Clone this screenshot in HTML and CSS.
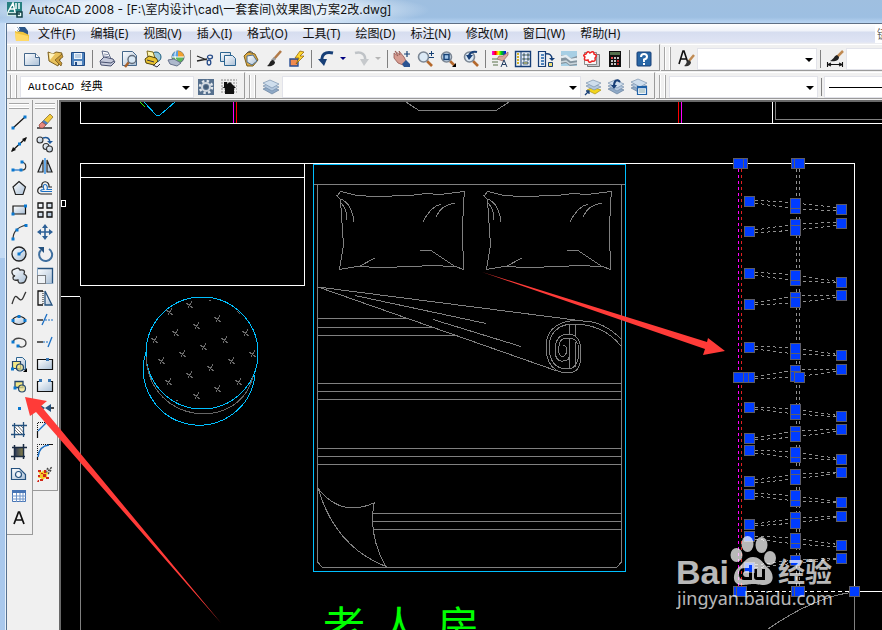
FILE: index.html
```html
<!DOCTYPE html>
<html lang="zh-CN">
<head>
<meta charset="utf-8">
<title>AutoCAD 2008</title>
<link rel="stylesheet" href="styles.css">
</head>
<body>
<svg class="defs" aria-hidden="true">
  <defs>
    <linearGradient id="sheet" x1="0" y1="0" x2="1" y2="1"><stop offset="0" stop-color="#fff"/><stop offset="1" stop-color="#a9bfd6"/></linearGradient>
    <linearGradient id="spectrum"><stop offset="0" stop-color="#f0f"/><stop offset=".25" stop-color="#f00"/><stop offset=".45" stop-color="#ff0"/><stop offset=".65" stop-color="#0d0"/><stop offset="1" stop-color="#00f"/></linearGradient>
    <linearGradient id="shade" x1="0" x2="1"><stop offset="0" stop-color="#23335c"/><stop offset="1" stop-color="#8f8748"/></linearGradient>
    <g id="dot"><rect x="-1.5" y="-1.5" width="3" height="3" fill="#0a78d0"/></g>
    <g id="stack"><path d="M1 11l7-3 9 4-7 4z" fill="#8fa9c6" stroke="#5d7796" stroke-width=".6"/><path d="M1 8l7-3 9 4-7 4z" fill="#b4c8de" stroke="#6c86a5" stroke-width=".6"/><path d="M1 5l7-3 9 4-7 4z" fill="#cfdeed" stroke="#6c86a5" stroke-width=".6"/></g>
    <g id="glass"><path d="M11 11l5 5" stroke="#b4682c" stroke-width="2.6"/><circle cx="7.500" cy="7" r="5" fill="#dbe9f5" stroke="#7c8794" stroke-width="1.600"/></g>
    <g id="brush"><path d="M16 1l-7 8" stroke="#b27a48" stroke-width="2.500"/><path d="M10 8L7 11" stroke="#999" stroke-width="3"/><path d="M8 10c-3 0-3 4-6 6 4 1 8-1 8-4z" fill="#222"/></g>
  </defs>
</svg>
<div class="app">
  <header class="title">
    <svg class="logo" viewBox="0 0 16 16"><path d="M0 0h15v12H0z" fill="#267f80"/><path d="M1 10L6 1l2 9M3 7h4M9 1v6M12 1v6" stroke="#fff" stroke-width="1.500" fill="none"/><path d="M0 10h9v4H0z" fill="#cfe9e6"/><path d="M1 12h12M10 10v5h5v-5z" stroke="#123f45" stroke-width="1.500" fill="#e8fffb"/></svg>
    <h1>AutoCAD 2008 - [F:\室内设计\cad\一套套间\效果图\方案2改.dwg]</h1>
  </header>
  <div class="window">
    <nav class="menu">
      <svg class="doc" viewBox="0 0 16 16"><path d="M3 1h8l3 4v7H3z" fill="#2c5688"/><path d="M1 5l8 1 6 3v6H2z" fill="#f0c43c"/><path d="M1 7l13 3 1 5H2z" fill="#ffda68"/><path d="M3 0v6M0 3h6M1 1l4 4M5 1L1 5" stroke="#fff"/></svg>
      <button>文件(F)</button><button>编辑(E)</button><button>视图(V)</button><button>插入(I)</button><button>格式(O)</button><button>工具(T)</button><button>绘图(D)</button><button>标注(N)</button><button>修改(M)</button><button>窗口(W)</button><button>帮助(H)</button>
      <input class="ask" aria-label="帮助" value="键">
    </nav>
    <div class="row">
      <div class="bar">
        <span class="grip"></span>
        <button aria-label="新建"><svg viewBox="0 0 18 18"><path d="M1.500 3.500h11l4 4v8h-15z" fill="url(#sheet)" stroke="#44678b"/><path d="M12.500 3.500v4h4" fill="#fff" stroke="#44678b"/></svg></button>
        <button aria-label="打开"><svg viewBox="0 0 18 18"><path d="M2 2l5 2 3-2 6 1-4 13-9-5z" fill="#e9c25c" stroke="#7d6224"/><path d="M3 3l6 1-5 6z" fill="#fff3bd"/><path d="M16 4l-7 6 6 6 1-3-3-3 4-3z" fill="#c99a36" stroke="#6d531e" stroke-width=".7"/></svg></button>
        <button aria-label="保存"><svg viewBox="0 0 18 18"><path d="M2.500 2.500h13v13h-13z" fill="#4d82bd" stroke="#1f4a85"/><path d="M5 3h8v6H5z" fill="#eef5fb"/><path d="M6 5h6M6 7h6" stroke="#8aa9cd"/><path d="M5 11h8v4H5z" fill="#d9e5f1"/><path d="M6 12h2v3H6z" fill="#1f4a85"/></svg></button>
        <i class="sep"></i>
        <button aria-label="打印"><svg viewBox="0 0 18 18"><path d="M4 1l6 1 3 7H6z" fill="#fff" stroke="#5b6784"/><path d="M2 11l4-4 9 2 2 3-4 4-10-1z" fill="#c5cadb" stroke="#47506e"/><path d="M3 12l10 1 3-2" stroke="#47506e" fill="none"/><path d="M6 4l4 .6M6 6l5 .6" stroke="#8a93ae"/></svg></button>
        <button aria-label="打印预览"><svg viewBox="0 0 18 18"><path d="M1.500 1.500h10l4 4v10h-14z" fill="url(#sheet)" stroke="#44678b"/><path d="M8 12l-4 5" stroke="#a8622c" stroke-width="2.500"/><circle cx="11" cy="9.500" r="4" fill="#d8e8f5" stroke="#606c7b" stroke-width="1.400"/></svg></button>
        <button aria-label="发布"><svg viewBox="0 0 18 18"><circle cx="12" cy="7" r="5" fill="#9cc8dc" stroke="#1c5c7d"/><path d="M3 1l6 1 2 6-7-1z" fill="#fff7b0" stroke="#806c1c"/><path d="M1 9l4-3 7 2 2 3-4 4-8-2z" fill="#e9c332" stroke="#4f420e"/><path d="M3 10l7 2M9 15l4 2 3-3" stroke="#334" fill="none"/></svg></button>
        <button aria-label="三维 DWF"><svg viewBox="0 0 18 18"><circle cx="11" cy="7" r="6" fill="#5fb55a" stroke="#567"/><path d="M11 1a6 6 0 0 1 6 6h-6z" fill="#f0a030"/><path d="M5 7a6 6 0 0 1 6-6v6z" fill="#5aa0e0"/><path d="M9 1c-2 4-1 8 2 12M5 7h12" stroke="#fff" fill="none"/><path d="M1 10l6-1 7 4-4 3-7-2z" fill="#adb8cc" stroke="#66718b"/></svg></button>
        <i class="sep"></i>
        <button aria-label="剪切"><svg viewBox="0 0 18 18"><path d="M1 6l10 4M1 11l10-2" stroke="#222" stroke-width="1.300"/><ellipse cx="14" cy="7" rx="2.500" ry="1.800" fill="none" stroke="#284d8a" stroke-width="1.300"/><ellipse cx="13" cy="12.500" rx="1.800" ry="2.500" fill="none" stroke="#284d8a" stroke-width="1.300"/></svg></button>
        <button aria-label="复制"><svg viewBox="0 0 18 18"><path d="M1.500 2.500h10v9h-10z" fill="url(#sheet)" stroke="#2c6591"/><path d="M5.500 5.500h8l3 3v7h-11z" fill="url(#sheet)" stroke="#2c6591"/></svg></button>
        <button aria-label="粘贴"><svg viewBox="0 0 18 18"><path d="M2 6l4-4 7 2 3 6-5 6H5z" fill="#dda942" stroke="#7d601d"/><path d="M5 6l6-1 4 6-5 4-5-3z" fill="url(#sheet)" stroke="#4a6e91"/><path d="M5 3l3-2 3 2" fill="none" stroke="#555"/></svg></button>
        <button aria-label="特性匹配"><svg viewBox="0 0 18 18"><use href="#brush"/></svg></button>
        <button aria-label="块编辑器"><svg viewBox="0 0 18 18"><path d="M2 9h8v7H2z" fill="#f08a50" stroke="#274d94" stroke-width="1.400"/><path d="M12 1L7 8h4l-3 6 8-8h-4l4-4z" fill="#ffd62e" stroke="#8a5a00" stroke-width=".7"/></svg></button>
        <i class="sep"></i>
        <button aria-label="放弃"><svg viewBox="0 0 18 18"><path d="M16 3C8 1 4 5 5 11" fill="none" stroke="#173f77" stroke-width="3"/><path d="M1 9h9l-3 7z" fill="#173f77"/></svg></button>
        <button class="drop" aria-label="放弃列表"></button>
        <button aria-label="重做"><svg viewBox="0 0 18 18"><path d="M3 3c7-2 11 2 10 8" fill="none" stroke="#bfc3c7" stroke-width="2.500"/><path d="M8 9h9l-5 7z" fill="#c6c9cc"/></svg></button>
        <button class="drop off" aria-label="重做列表"></button>
        <i class="sep"></i>
        <button aria-label="平移"><svg viewBox="0 0 18 18"><path d="M1 3l4 3-3-5 5 4-1-4 5 6 2 4-3 4-5-2-4-5z" fill="#d69c91" stroke="#925750" stroke-width=".8"/><path d="M9 14l4-4 4 4v3h-6z" fill="#2b5391"/><path d="M14 1v6M11 4h6" stroke="#174175" stroke-width="1.200"/></svg></button>
        <button aria-label="实时缩放"><svg viewBox="0 0 18 18"><use href="#glass"/><path d="M13 3.500h5M15.500 1v5M13 7.500h5" stroke="#174175"/></svg></button>
        <button aria-label="窗口缩放"><svg viewBox="0 0 18 18"><use href="#glass"/><path d="M5 4.500h5v5H5z" fill="#9fc4ea" stroke="#174175" stroke-width="1.500"/><path d="M17 13v4h-4z"/></svg></button>
        <button aria-label="缩放上一个"><svg viewBox="0 0 18 18"><use href="#glass"/><path d="M15 2c-5-1-8 1-8 5" fill="none" stroke="#173f77" stroke-width="2.200"/><path d="M4 5h7l-4 5z" fill="#173f77"/></svg></button>
        <i class="sep"></i>
        <button aria-label="特性"><svg viewBox="0 0 18 18"><path d="M1 1h14v4H1z" fill="url(#spectrum)"/><path d="M17 5l-5 6-6-2 2-3h4l5-4z" fill="#dba89b" stroke="#92605a" stroke-width=".7"/><path d="M1 9h6M1 12h6M2 15h5" stroke="#8b9a80" stroke-width="1.600"/><path d="M10 17l3-7 3 7M11 14.500h4" stroke="#243f63" fill="none"/></svg></button>
        <button aria-label="设计中心"><svg viewBox="0 0 18 18"><path d="M1.500 1.500h15v15h-15z" fill="#edf2f4" stroke="#173f77" stroke-width="1.400"/><path d="M7 1v16" stroke="#173f77"/><path d="M3 4h2M3 7h2M3 10h2M3 13h2" stroke="#d2b22a" stroke-width="2"/><path d="M9 4h2v2H9zM13 4h2v2h-2zM9 8h2v2H9zM13 8h2v2h-2zM9 12h5v2H9z" fill="#f1df72" stroke="#173f77" stroke-width=".8"/></svg></button>
        <button aria-label="工具选项板"><svg viewBox="0 0 18 18"><path d="M1.500 1.500h7v15h-7z" fill="#e7edf5" stroke="#173f77" stroke-width="1.200"/><path d="M4 5h3M4 8h3M4 11h3M4 14h3" stroke="#1f62a8" stroke-width="1.500"/><path d="M8 4q7-1 7 5" fill="none" stroke="#173f77" stroke-width="1.500"/><path d="M12 8h6l-3 3z" fill="#173f77"/><path d="M11.500 12.500h4v4h-4z" fill="#f1df72" stroke="#173f77"/></svg></button>
        <button aria-label="图纸集管理器"><svg viewBox="0 0 18 18"><path d="M1 1h16v15H1z" fill="#a7cfe4"/><path d="M1 5h4l6 3 6-2v9l-7 1-4-3-5 1z" fill="#84949f"/><path d="M1 7l5-1 5 4 6-1" stroke="#e5edf1" stroke-width="2.500" fill="none"/><path d="M1 12l5-1 4 3 7-1" stroke="#cdd8de" stroke-width="1.500" fill="none"/></svg></button>
        <button aria-label="标记集管理器"><svg viewBox="0 0 18 18"><path d="M4.500 4.500h12v12h-12z" fill="#c9cdd2" stroke="#777"/><path d="M1.500 2.500h12v12h-12z" fill="#f6f6f6" stroke="#8b8b8b"/><path d="M3 4q2-4 4-1 4-3 4 1 4 1 1 4 1 4-3 3-3 3-4-1-5 1-3-3-3-2 1-3z" fill="#fff" stroke="#e22" stroke-width="1.500"/></svg></button>
        <button aria-label="快速计算器"><svg viewBox="0 0 18 18"><path d="M3 1h12v16H3z" fill="#111"/><path d="M4 2h10v3H4z" fill="#52704c"/><path d="M5 8h2M8 8h2M11 8h2M5 11h2M8 11h2M5 14h2M8 14h2" stroke="#fff" stroke-width="1.600"/><path d="M11 11h2M11 14h2M5 8h2" stroke="#e22" stroke-width="1.600"/></svg></button>
        <i class="sep"></i>
        <button aria-label="帮助"><svg viewBox="0 0 18 18"><rect x="2" y="2" width="14" height="14" rx="1" fill="#2866a5" stroke="#173f77"/><path d="M6 7q0-3 3-3t3 2.500-3 3V12" stroke="#fff" stroke-width="2" fill="none"/><path d="M8 13h2v2H8z" fill="#fff"/></svg></button>
      </div>
      <div class="bar last">
        <span class="grip"></span>
        <button aria-label="文字样式"><svg viewBox="0 0 18 18"><path d="M2 14L6 1h1l4 12M4 9h6" stroke="#111" stroke-width="1.600" fill="none"/><path d="M17 5l-5 6" stroke="#c08a52" stroke-width="2.500"/><path d="M12 10c-3 1-2 4-5 6 4 1 7-1 7-4z" fill="#333"/></svg></button>
        <span class="combo w120"><select aria-label="文字样式"><option></option></select></span>
        <i class="sep"></i>
        <button aria-label="标注样式"><svg viewBox="0 0 18 18"><path d="M17 1l-6 6" stroke="#c08a52" stroke-width="2.500"/><path d="M11 5c-3 1-3 4-7 6 4 1 9 0 9-4z" fill="#222"/><path d="M1.500 12v5M16.500 12v5M2 14.500h14M5 13l-3 1.500L5 16M13 13l3 1.500-3 1.500" stroke="#111" stroke-width="1.100" fill="none"/></svg></button>
        <span class="combo w150"><select aria-label="标注样式"><option></option></select></span>
      </div>
    </div>
    <div class="row">
      <div class="bar">
        <span class="grip"></span>
        <span class="combo w174"><select aria-label="工作空间"><option>AutoCAD 经典</option></select></span>
        <button aria-label="工作空间设置"><svg viewBox="0 0 18 18"><path d="M1 1h16v16H1z" fill="#56708e"/><circle cx="9" cy="9" r="6" fill="none" stroke="#e3e8ed" stroke-width="2.500" stroke-dasharray="2.400 2.300"/><circle cx="9" cy="9" r="4" fill="none" stroke="#d2d8df" stroke-width="2"/><circle cx="9" cy="9" r="2" fill="#445b75"/></svg></button>
        <button aria-label="我的工作空间"><svg viewBox="0 0 18 18"><path d="M1 2h16M1 5h16M1 8h16M1 11h16M1 14h16" stroke="#888" stroke-dasharray="2 1"/><path d="M4 9V4h3v2l3-2 6 6h-2v6H5v-6H2z" fill="#111"/></svg></button>
      </div>
      <div class="bar">
        <span class="grip"></span>
        <button aria-label="图层特性管理器"><svg viewBox="0 0 18 18"><use href="#stack"/></svg></button>
        <span class="combo w299"><select aria-label="图层"><option></option></select></span>
        <button aria-label="将对象的图层置为当前"><svg viewBox="0 0 18 18"><path d="M3 12l6-3 8 3-6 4z" fill="#f3d51d" stroke="#988100" stroke-width=".6"/><path d="M2 8l7-3 8 4-7 3z" fill="#b4c8de" stroke="#6c86a5" stroke-width=".6"/><path d="M2 5l7-3 8 3-7 4z" fill="#cfdeed" stroke="#6c86a5" stroke-width=".6"/><path d="M1 17l4-4M2 13h3v3" stroke="#173f77" stroke-width="1.300" fill="none"/></svg></button>
        <button aria-label="上一个图层"><svg viewBox="0 0 18 18"><use href="#stack"/><path d="M13 4c-3-4-6-1-6 4" stroke="#173f77" stroke-width="2" fill="none"/><path d="M4 7h6l-3 4z" fill="#173f77"/></svg></button>
        <button aria-label="图层状态管理器"><svg viewBox="0 0 18 18"><use href="#stack" y="-1"/><path d="M7.500 8.500h9v8h-9z" fill="#eef4fb" stroke="#1f62a8" stroke-width="1.200"/><path d="M7 9.500h10" stroke="#1f62a8" stroke-width="1.500"/><path d="M9 12h6M9 14h6" stroke="#8aa"/></svg></button>
      </div>
      <div class="bar last">
        <span class="grip"></span>
        <span class="combo w149"><select aria-label="颜色"><option></option></select></span>
        <i class="sep"></i>
        <span class="combo w150 linetype"><select aria-label="线型"><option></option></select></span>
      </div>
    </div>
    <main class="work">
      <div class="palette">
        <span class="hgrip"></span>
        <button aria-label="直线"><svg viewBox="0 0 18 18"><path d="M3 15L15 4" stroke="#111" stroke-width="1.200"/><use href="#dot" x="3" y="15"/><use href="#dot" x="15" y="4"/></svg></button>
        <button aria-label="构造线"><svg viewBox="0 0 18 18"><path d="M2 16L16 3" stroke="#111" stroke-width="1.200"/><path d="M1 17l2-5 3 3zM17 2l-2 5-3-3z" fill="#111"/><use href="#dot" x="9.500" y="9"/></svg></button>
        <button aria-label="多段线"><svg viewBox="0 0 18 18"><path d="M3 13h9" stroke="#1b6fc4" stroke-width="1.200"/><path d="M12 13c5 0 5-7 0-8" stroke="#333" stroke-width="1.200" fill="none"/><use href="#dot" x="3" y="13"/><use href="#dot" x="11" y="13"/><use href="#dot" x="12" y="5"/></svg></button>
        <button aria-label="正多边形"><svg viewBox="0 0 18 18"><path d="M9 2.500L15.500 8 13 15.500H5.500L3 8z" fill="url(#sheet)" stroke="#222" stroke-width="1.200"/></svg></button>
        <button aria-label="矩形"><svg viewBox="0 0 18 18"><path d="M3 5h12.500v8H3z" fill="url(#sheet)" stroke="#111" stroke-width="1.200"/><use href="#dot" x="3" y="13"/><use href="#dot" x="15.500" y="5"/></svg></button>
        <button aria-label="圆弧"><svg viewBox="0 0 18 18"><path d="M3 16C3 9 8 4 16 2" stroke="#333" stroke-width="1.200" fill="none"/><use href="#dot" x="3" y="16"/><use href="#dot" x="7" y="7"/><use href="#dot" x="16" y="2.500"/></svg></button>
        <button aria-label="圆"><svg viewBox="0 0 18 18"><circle cx="9" cy="9" r="7" fill="url(#sheet)" stroke="#222" stroke-width="1.300"/><path d="M9 9l5-4" stroke="#1b6fc4" stroke-width="1.300"/><use href="#dot" x="9" y="9"/></svg></button>
        <button aria-label="修订云线"><svg viewBox="0 0 18 18"><path d="M3 8q-3-5 2-6 4-2 5 1 6-1 4 4 4 2 2 5-1 4-4 4-4 1-4-3-5 1-5-2 0-2 2-2z" fill="url(#sheet)" stroke="#333" stroke-width="1.300"/></svg></button>
        <button aria-label="样条曲线"><svg viewBox="0 0 18 18"><path d="M2 15C4 9 5 6 7 8s4 5 6 1 2-5 3-6" stroke="#333" stroke-width="1.300" fill="none"/></svg></button>
        <button aria-label="椭圆"><svg viewBox="0 0 18 18"><ellipse cx="9" cy="9.500" rx="6.500" ry="4" fill="url(#sheet)" stroke="#222" stroke-width="1.200"/><use href="#dot" x="3" y="9.500"/><use href="#dot" x="9" y="5.500"/><use href="#dot" x="15" y="9.500"/></svg></button>
        <button aria-label="椭圆弧"><svg viewBox="0 0 18 18"><path d="M3 9c2-6 13-4 13 1 0 4-5 5-7 3" stroke="#444" stroke-width="1.300" fill="none"/><use href="#dot" x="3" y="9"/><use href="#dot" x="8" y="13"/></svg></button>
        <button aria-label="插入块"><svg viewBox="0 0 18 18"><path d="M6.500 2.500h6l3 3v9h-9z" fill="url(#sheet)" stroke="#2c6591"/><path d="M2.500 6.500h8v7h-8z" fill="#f3e684" stroke="#24466b" stroke-width="1.200"/><circle cx="10" cy="12.500" r="3.500" fill="#f3e684" fill-opacity=".7" stroke="#24466b" stroke-width="1.200"/><use href="#dot" x="2.500" y="14"/><path d="M17 13v4h-4z"/></svg></button>
        <button aria-label="创建块"><svg viewBox="0 0 18 18"><path d="M5 4.500h8v6H5z" fill="#f3e684" stroke="#24466b" stroke-width="1.300"/><circle cx="12" cy="11.500" r="3.500" fill="#f3e684" fill-opacity=".7" stroke="#24466b" stroke-width="1.200"/><use href="#dot" x="5" y="11"/></svg></button>
        <button aria-label="点"><svg viewBox="0 0 18 18"><use href="#dot" x="9.500" y="9.500"/></svg></button>
        <button aria-label="图案填充"><svg viewBox="0 0 18 18"><path d="M5 5h9v8H5z" fill="#fff"/><path d="M5 6l7 7M8 5l6 7M5 9l4 4M11 5l3 3" stroke="#777"/><path d="M2 4.500h15M1 13.500h14M4.500 2v15M13.500 1v15" stroke="#24517e" stroke-width="1.300"/></svg></button>
        <button aria-label="渐变色"><svg viewBox="0 0 18 18"><path d="M4 4h10v10H4z" fill="url(#shade)"/><path d="M2 4.500h15M1 13.500h14M4.500 2v15M13.500 1v15" stroke="#1b2b42" stroke-width="1.500"/></svg></button>
        <button aria-label="面域"><svg viewBox="0 0 18 18"><path d="M1.500 14.500v-11h8l6 6v5z" fill="url(#sheet)" stroke="#24517e" stroke-width="1.200"/><circle cx="8.500" cy="9.500" r="3" fill="#f0f5fa" stroke="#24517e" stroke-width="1.200"/></svg></button>
        <button aria-label="表格"><svg viewBox="0 0 18 18"><path d="M2.500 3.500h13v11h-13z" fill="#fff" stroke="#4775b5"/><path d="M2 3h14v3H2z" fill="#4775b5"/><path d="M6.500 6v9M10 6v9M13 6v9M2 9h14M2 12h14" stroke="#6f95ca"/></svg></button>
        <button aria-label="多行文字"><svg viewBox="0 0 18 18"><path d="M4 15L8.500 3h1L14 15M6 11h7" stroke="#111" stroke-width="1.700" fill="none"/></svg></button>
      </div>
      <div class="palette">
        <span class="hgrip"></span>
        <button aria-label="删除"><svg viewBox="0 0 18 18"><path d="M1 15h15" stroke="#111" stroke-width="1.300"/><path d="M6 9l8-8 3 3-7 8z" fill="#f3cb3d" stroke="#7d601d" stroke-width=".7"/><path d="M6 9l4 3 2-2-4-3z" fill="#4b7fc0"/><path d="M3 12l3-3 4 3-3 3H4z" fill="#e68a80" stroke="#8d3c35" stroke-width=".7"/></svg></button>
        <button aria-label="复制对象"><svg viewBox="0 0 18 18"><circle cx="4" cy="5" r="3" fill="url(#sheet)" stroke="#333" stroke-width="1.100"/><path d="M7 3q6-2 7 4" stroke="#1d5799" stroke-width="1.500" fill="none"/><path d="M11 6h6l-3 3z" fill="#1d5799"/><circle cx="10" cy="11.500" r="3" fill="url(#sheet)" stroke="#333" stroke-width="1.100"/><circle cx="13.500" cy="14" r="3" fill="url(#sheet)" stroke="#333" stroke-width="1.100"/></svg></button>
        <button aria-label="镜像"><svg viewBox="0 0 18 18"><path d="M7 3v12H2zM11 3v12h5z" fill="url(#sheet)" stroke="#222" stroke-width="1.200"/><path d="M9 1v16" stroke="#1b86e8" stroke-width="1.300"/></svg></button>
        <button aria-label="偏移"><svg viewBox="0 0 18 18"><path d="M16 8h-3c1-7-9-7-7 0-5-1-6 7-1 7h11" stroke="#222" stroke-width="1.200" fill="none"/><path d="M16 10.500h-5c1-2 0-5-2-5s-2 3-1 5c-4 0-4 2-2 2h10" stroke="#1b6fc4" stroke-width="1.100" fill="none"/></svg></button>
        <button aria-label="阵列"><svg viewBox="0 0 18 18"><path d="M2 2h5v5H2zM11 2h5v5h-5zM2 11h5v5H2zM11 11h5v5h-5z" fill="url(#sheet)" stroke="#111" stroke-width="1.300"/></svg></button>
        <button aria-label="移动"><svg viewBox="0 0 18 18"><path d="M9 3v12M3 9h12" stroke="#2c5f96" stroke-width="1.600"/><path d="M9 1l3 4H6zM9 17l3-4H6zM1 9l4-3v6zM17 9l-4-3v6z" fill="#2c5f96"/></svg></button>
        <button aria-label="旋转"><svg viewBox="0 0 18 18"><path d="M13 4a6.500 6.500 0 1 1-8 1" stroke="#3f6f9f" stroke-width="2" fill="none"/><path d="M2 2h6v6z" fill="#24517e"/></svg></button>
        <button aria-label="缩放"><svg viewBox="0 0 18 18"><path d="M1.500 1.500h15v15h-15z" fill="url(#sheet)"/><path d="M1 1.500h15.500V17" fill="none" stroke="#24517e" stroke-width="1.300"/><path d="M1.500 1v7M10 16.500h7" stroke="#8ba5bf"/><path d="M1.500 8.500h8v8h-8z" fill="#eef2f6" stroke="#111" stroke-dasharray="1 1"/></svg></button>
        <button aria-label="拉伸"><svg viewBox="0 0 18 18"><path d="M9 2v14h7z" fill="url(#sheet)" stroke="#24517e" stroke-width="1.300"/><path d="M7 2H2v14h5" fill="none" stroke="#111" stroke-width="1.300"/><path d="M7 2v14" stroke="#111" stroke-dasharray="1 1"/></svg></button>
        <button aria-label="修剪"><svg viewBox="0 0 18 18"><path d="M1 9h6" stroke="#111" stroke-width="1.300"/><path d="M9 9h8" stroke="#1b6fc4" stroke-dasharray="2 1"/><path d="M6 14l5-11" stroke="#1b6fc4" stroke-width="1.300"/></svg></button>
        <button aria-label="延伸"><svg viewBox="0 0 18 18"><path d="M1 9h6" stroke="#111" stroke-width="1.300"/><path d="M7 9h6" stroke="#1b6fc4" stroke-dasharray="2 1"/><path d="M12 14l4-10" stroke="#1b6fc4" stroke-width="1.300"/></svg></button>
        <button aria-label="打断于点"><svg viewBox="0 0 18 18"><path d="M1.500 4.500h15v10h-15z" fill="url(#sheet)" stroke="#111" stroke-width="1.200"/><path d="M10 3h3v3h-3z" fill="#3a78b5"/></svg></button>
        <button aria-label="打断"><svg viewBox="0 0 18 18"><path d="M5 4.500H1.500v10h15v-10H13" fill="url(#sheet)" stroke="#111" stroke-width="1.200"/><path d="M3 2h3v3H3zM12 2h3v3h-3z" fill="#3a78b5"/></svg></button>
        <button aria-label="合并"><svg viewBox="0 0 18 18"><path d="M0 9h4M14 9h4" stroke="#111" stroke-width="1.500"/><path d="M3 5l6 4-6 4zM15 5L9 9l6 4z" fill="#24517e"/></svg></button>
        <button aria-label="倒角"><svg viewBox="0 0 18 18"><path d="M1.500 9V1.500H16" fill="none" stroke="#111" stroke-dasharray="1 1"/><path d="M1.500 17v-7M10 1.500h7" stroke="#111" stroke-width="1.200"/><path d="M2 10l8-8" stroke="#1b6fc4" stroke-width="1.300"/></svg></button>
        <button aria-label="圆角"><svg viewBox="0 0 18 18"><path d="M1.500 12V1.500H12" fill="none" stroke="#111" stroke-dasharray="1 1"/><path d="M1.500 17v-3M12 1.500h5" stroke="#111" stroke-width="1.200"/><path d="M2 14Q3 3 13 2" stroke="#1b6fc4" stroke-width="1.400" fill="none"/></svg></button>
        <button aria-label="分解"><svg viewBox="0 0 18 18"><path d="M10 8l6-6M12 3l-2 3M15 5l-3 4" stroke="#444" stroke-width="1.500" stroke-dasharray="2 1"/><path d="M2 6l4 1 1-2 2 3 3-1-1 4 1 3-3-1-3 3-1-3-3 0 2-3z" fill="#f4ca29"/><path d="M2 5h3v2H2zM8 5h2v3H8zM2 10h2v2H2zM7 9h3v3H7zM10 12h3v2h-3zM4 14h3v2H4zM2 15h1v2H1zM5 8h2v1H5z" fill="#d32619"/></svg></button>
      </div>
      <section class="canvas" aria-label="绘图区">
        <svg class="drawing" shape-rendering="crispEdges">
          <defs>
            <g id="tick"><path d="M-4 -2l7 5M2 -4l-4 7"/></g>
            <g id="pillow">
              <path d="M337.500 195.500l3-4 17 4 17 1 36-1 15-2 15 1 24-3-1 12-1 27 1 39-8-3-26-1-15 1-35 1-22-1-18 3 4-24-2-30-1-16-4-4z"/>
              <path d="M341 199q11 5 13 23M341 203q7 7 5 17M423 222q7-15 18-18M436 217q5-12 19-14M420 250.500h11l24 16M375 258l-17 9"/>
            </g>
            <rect id="nib" x="-5" y="-5" width="10" height="10"/>
          </defs>
          <g transform="translate(-61 -102)" fill="none">
            <g stroke="#fff">
              <path d="M80.500 102v21.500H2000M772.500 102v21M80.500 163.500h774V592M80.500 163v122.500h224V163M80.500 177.500h224M61 296.500h19"/>
              <path d="M61.500 200.500h4v6h-4z"/>
              <path d="M740 591.500h112" stroke-dasharray="4 3"/><path d="M855 591.500H2000"/>
            </g>
            <g stroke="#808080">
              <path d="M80.500 297v2000M775.500 102v17.500H2000M406 102l13 8.500h77l13-8.500M854.500 597v2000"/>
              <path d="M313 184.500h312M317.500 184v378l5 5.500h294l5-5.500V184"/>
              <path d="M317 318.500h91M317 327.500h116M317 335.500h138M317 383.500h304M317 391.500h304M317 399.500h304M317 448.500h304M317 456.500h304M317 464.500h304M373 513.500h248M372 521.500h249M373 529.500h248"/>
              <path d="M318 287l265 34M318 287l239 84M355 295.500l131 28M433 319.500l88 27"/>
              <path d="M621 339q-18-18-38-18c-20-2-37 5-37 26 0 17 9 26 21 26s14-8 14-20-4-19-13-19-13 7-13 16 4 12 8 11 6-1 6-4"/>
              <path d="M621 346q-18-22-48-22c-14 0-24 9-24 23s7 22 18 22c9 0 12-7 12-19 0-7-4-12-12-12s-9 8-8 15c1 5 7 5 8-3 0-3-2-5-4-5M569.500 325v9M569.500 338v31M575.500 324v13M575.500 342v25"/>
              <use href="#pillow"/><use href="#pillow" x="147"/>
              <path d="M317 487q23 31 57 16v1q-6 31 12 63M318 488q17 59 69 79"/>
              <path d="M854 592q-40 5-86 37"/>
            </g>
            <g stroke="#00bfff">
              <path d="M313.500 571.500v-407h312v407z"/>
              <path d="M144 102l12 13h4l15-13"/>
              <circle cx="202" cy="353" r="56"/><path d="M146 352a56 56 0 1 0 109 23"/>
            </g>
            <path d="M140 102l5 5" stroke="#3f0"/>
            <path d="M146 357C150 426 240 432 253 376" stroke="#666"/>
            <g stroke="#6a6a6a">
              <use href="#tick" x="190" y="305"/><use href="#tick" x="170" y="312"/><use href="#tick" x="218" y="319"/><use href="#tick" x="197" y="326"/><use href="#tick" x="246" y="333"/><use href="#tick" x="176" y="333"/><use href="#tick" x="225" y="340"/><use href="#tick" x="155" y="340"/><use href="#tick" x="204" y="347"/><use href="#tick" x="183" y="354"/><use href="#tick" x="253" y="354"/><use href="#tick" x="232" y="361"/><use href="#tick" x="162" y="361"/><use href="#tick" x="211" y="368"/><use href="#tick" x="190" y="375"/><use href="#tick" x="169" y="382"/><use href="#tick" x="239" y="382"/><use href="#tick" x="218" y="389"/><use href="#tick" x="197" y="396"/><path d="M237 311l3 3M209 301l2-1M176 400l2 1"/>
            </g>
            <path d="M233.500 102v21M681.500 102v21" stroke="#f0f"/><path d="M236.500 102v21M678.500 102v21" stroke="#f00"/>
            <path d="M738.500 169v422" stroke="#f0f" stroke-dasharray="3 3"/><path d="M741.500 169v422" stroke="#e02020" stroke-dasharray="3 3"/>
            <g stroke="#909090" stroke-dasharray="3 3">
              <path d="M796.500 169v422M799.500 169v422"/>
              <path d="M755 200l40 3 46 5M755 203l40 6 46 2M755 230l40-6 46-2M755 233l40-3 46-5M755 272l40 3 46 7M755 275l40 6 46 2M755 303l40-7 46-1M755 305l40-2 46-6M755 346l40 2 46 7M755 349l40 5 46 2M755 377l40-7 46-1M755 379l40-2 46-6"/>
              <path d="M755 407l40 2 46 7M755 409l40 5 46 3M755 438l40-7 46-2M755 440l40-3 46-6M755 450l40 2 46 7M755 453l40 5 46 2M755 480l40-6 46-2M755 483l40-4 46-6M755 493l40 3 46 6M755 496l40 5 46 2M755 524l40-6 46-2M755 526l40-3 46-6M755 536l40 2 46 7M755 539l40 5 46 3M755 565l40-5 46-2M755 568l40-5 46-4"/>
            </g>
            <g fill="#003cff" stroke="#5c5c68">
              <use href="#nib" x="742.500" y="163.500"/><use href="#nib" x="738.500" y="163.500"/><use href="#nib" x="796.500" y="163.500"/><use href="#nib" x="799.500" y="163.500"/>
              <use href="#nib" x="749.500" y="201.500"/><use href="#nib" x="749.500" y="231.500"/><use href="#nib" x="749.500" y="273.500"/><use href="#nib" x="749.500" y="304.500"/><use href="#nib" x="749.500" y="347.500"/><use href="#nib" x="749.500" y="377.500"/><use href="#nib" x="749.500" y="407.500"/><use href="#nib" x="749.500" y="438.500"/><use href="#nib" x="749.500" y="450.500"/><use href="#nib" x="749.500" y="481.500"/><use href="#nib" x="749.500" y="494.500"/><use href="#nib" x="749.500" y="524.500"/><use href="#nib" x="749.500" y="536.500"/><use href="#nib" x="749.500" y="567.500"/>
              <use href="#nib" x="795.500" y="208.500"/><use href="#nib" x="795.500" y="203.500"/><use href="#nib" x="795.500" y="224.500"/><use href="#nib" x="795.500" y="230.500"/><use href="#nib" x="795.500" y="280.500"/><use href="#nib" x="795.500" y="275.500"/><use href="#nib" x="795.500" y="297.500"/><use href="#nib" x="795.500" y="302.500"/><use href="#nib" x="795.500" y="354.500"/><use href="#nib" x="795.500" y="348.500"/><use href="#nib" x="795.500" y="370.500"/><use href="#nib" x="795.500" y="376.500"/>
              <use href="#nib" x="795.500" y="414.500"/><use href="#nib" x="795.500" y="409.500"/><use href="#nib" x="795.500" y="431.500"/><use href="#nib" x="795.500" y="436.500"/><use href="#nib" x="795.500" y="457.500"/><use href="#nib" x="795.500" y="452.500"/><use href="#nib" x="795.500" y="474.500"/><use href="#nib" x="795.500" y="479.500"/><use href="#nib" x="795.500" y="501.500"/><use href="#nib" x="795.500" y="495.500"/><use href="#nib" x="795.500" y="517.500"/><use href="#nib" x="795.500" y="523.500"/><use href="#nib" x="795.500" y="543.500"/><use href="#nib" x="795.500" y="538.500"/><use href="#nib" x="795.500" y="560.500"/>
              <use href="#nib" x="841.500" y="209.500"/><use href="#nib" x="841.500" y="223.500"/><use href="#nib" x="841.500" y="282.500"/><use href="#nib" x="841.500" y="295.500"/><use href="#nib" x="841.500" y="355.500"/><use href="#nib" x="841.500" y="369.500"/><use href="#nib" x="841.500" y="416.500"/><use href="#nib" x="841.500" y="429.500"/><use href="#nib" x="841.500" y="459.500"/><use href="#nib" x="841.500" y="472.500"/><use href="#nib" x="841.500" y="502.500"/><use href="#nib" x="841.500" y="516.500"/><use href="#nib" x="841.500" y="545.500"/><use href="#nib" x="841.500" y="558.500"/>
              <use href="#nib" x="743.500" y="377.500"/><use href="#nib" x="738.500" y="377.500"/><use href="#nib" x="799.500" y="377.500"/><use href="#nib" x="738.500" y="591.500"/><use href="#nib" x="741.500" y="591.500"/><use href="#nib" x="796.500" y="591.500"/><use href="#nib" x="799.500" y="591.500"/><use href="#nib" x="854.500" y="591.500"/>
            </g>
            <text class="room" x="323 378 437" y="642">老人房</text>
          </g>
        </svg>
      </section>
    </main>
  </div>
  <svg class="overlay">
    <g fill="#ff3b38"><path d="M482 272L707 342l1-4 17 13-22 4 2-6z"/><path d="M25 397l22 4-6 5L221 623 36 412l-6 4z"/></g>
    <g class="mark">
      <text class="bai" x="676" y="584">Bai</text>
      <path fill-rule="evenodd" d="M753 557c7 0 9 5 14 10 8 6 8 18-3 18-5 0-7-1-11-1s-6 1-11 1c-10 0-10-11-4-17 6-5 8-11 15-11zM749 565v3h-4c-5 0-6 3-6 6 0 5 3 6 6 6h7v-15zm-3 6h3v6h-3c-4 0-4-6 0-6zM754 569v8c0 2 1 3 3 3h8v-11h-3v8h-5v-8z"/>
      <ellipse cx="736.500" cy="555" rx="6" ry="7"/><ellipse cx="747.500" cy="544" rx="6" ry="8"/><ellipse cx="761.500" cy="545" rx="6" ry="8"/><ellipse cx="770" cy="558" rx="6" ry="7"/>
      <text class="jy" x="778" y="582">经验</text>
      <text class="url" x="677" y="605">jingyan.baidu.com</text>
    </g>
  </svg>
</div>
</body>
</html>
```
FILE: styles.css
```css
* { box-sizing: border-box; }
body {
  margin: 0;
  overflow: hidden;
  color: #111;
  font: 12px/16px "Noto Sans", "Noto Sans CJK SC", sans-serif;
}
button {
  margin: 0;
  padding: 0;
  border: 0;
  background: none;
  color: inherit;
  font: inherit;
}
.defs { position: absolute; width: 0; height: 0; }
.app {
  position: relative;
  display: flex;
  flex-direction: column;
  min-height: 100vh;
  background: linear-gradient(#c3daf4 258px, #a9c8ec 258px);
}
.title {
  display: flex;
  align-items: center;
  gap: 6px;
  height: 23px;
  padding: 0 6px 4px 7px;
  background:
    radial-gradient(ellipse 230px 22px at 200px 10px, #e6f0fa 60%, transparent 100%),
    linear-gradient(#9fbfe0, #9dbfe2 75%, #b8d4f2);
}
.title h1 {
  margin: 0;
  font: 12px/16px Inter, "Noto Sans CJK SC", sans-serif;
  white-space: nowrap;
}
.logo { width: 16px; height: 16px; flex: none; }
.window {
  flex: 1;
  display: flex;
  flex-direction: column;
  margin-left: 6px;
  border-left: 1px solid #56718f;
  border-top: 1px solid #5f6f84;
  background: #f0f0f0;
  box-shadow: -1px 0 #e6f1fc;
}
.menu {
  display: flex;
  align-items: center;
  gap: 1px;
  height: 20px;
  background: linear-gradient(#fff, #eff2f9 35%, #d6ddef 40%, #dfe4f4 90%, #f0f0f0);
}
.menu button { flex: none; padding: 0 7px; white-space: nowrap; }
.doc { width: 16px; height: 16px; margin-left: 7px; flex: none; }
.ask {
  width: 7px;
  height: 18px;
  margin-left: auto;
  padding: 0 0 0 2px;
  border: 0;
  background: #fff;
  color: #666;
  font: inherit;
}
.row { display: flex; height: 28px; overflow: hidden; }
.bar {
  flex: none;
  display: flex;
  align-items: center;
  height: 27px;
  margin-right: 1px;
  padding: 2px 4px 0 3px;
  border-top: 1px solid #fff;
  border-right: 1px solid #9a9a9a;
  border-bottom: 1px solid #9a9a9a;
}
.bar.last { flex: 1 0 auto; padding-right: 0; border-right: 0; margin-right: 0; }
.bar button { display: grid; place-items: center; width: 23px; height: 23px; flex: none; }
.bar svg, .palette svg { width: 18px; height: 18px; display: block; }
.grip {
  width: 7px;
  height: 23px;
  margin-right: 3px;
  border: solid #a6a6a6;
  border-width: 0 1px;
  box-shadow: inset 1px 0 #fff, inset -1px 0 #fff;
}
.sep { width: 6px; height: 18px; flex: none; background: linear-gradient(#808080, #808080) center / 1px 100% no-repeat; }
.bar .drop { width: 12px; }
.drop::after, .combo::after {
  content: "";
  border: 3px solid transparent;
  border-top-color: #000080;
  border-bottom: 0;
}
.drop.off::after { border-top-color: #b5b5b5; }
.combo { position: relative; flex: none; height: 22px; }
.combo::after {
  position: absolute;
  right: 4px;
  top: 10px;
  border-width: 4px 4px 0;
  border-top-color: #000;
  pointer-events: none;
}
.combo select {
  appearance: none;
  display: block;
  width: 100%;
  height: 100%;
  padding: 0 20px 0 7px;
  border: 1px solid #e2e3ea;
  border-radius: 0;
  background: #fff;
  color: #000;
  font: 11px/16px "Liberation Mono", "Noto Sans CJK SC", monospace;
}
.w120 { width: 120px; }
.w149 { width: 149px; }
.w150 { width: 150px; }
.w174 { width: 174px; }
.w299 { width: 299px; }
.linetype::before {
  content: "";
  position: absolute;
  left: 5px;
  right: 20px;
  top: 11px;
  border-top: 1px solid #000;
}
.work { flex: 1; display: flex; align-items: flex-start; }
.palette {
  flex: none;
  display: flex;
  flex-direction: column;
  align-items: center;
  width: 26px;
  padding: 3px 1px 5px 0;
  border-right: 1px solid #9a9a9a;
  border-bottom: 1px solid #9a9a9a;
}
.palette + .palette { width: 25px; padding: 3px 0 5px; }
.hgrip {
  width: 20px;
  height: 6px;
  margin-bottom: 2px;
  border: solid #a6a6a6;
  border-width: 1px 0;
  box-shadow: inset 0 1px #fff, inset 0 -1px #fff;
}
.palette button { display: grid; place-items: center; width: 22px; height: 22px; }
.canvas {
  position: relative;
  flex: 1;
  align-self: stretch;
  margin-left: 1px;
  border-left: 2px solid #696969;
  border-top: 2px solid #696969;
  background: #000;
}
.drawing, .overlay { position: absolute; left: 0; top: 0; width: 100%; height: 100%; }
.overlay { pointer-events: none; }
.room { fill: #0f0; font: 400 42px "Noto Sans CJK SC", sans-serif; }
.mark { fill: #fff; opacity: .72; }
.bai { font: bold 34px "Liberation Sans", sans-serif; }
.jy { font: bold 27px "Noto Sans CJK SC", sans-serif; }
.url { font: 18px "Noto Sans", sans-serif; }
```
